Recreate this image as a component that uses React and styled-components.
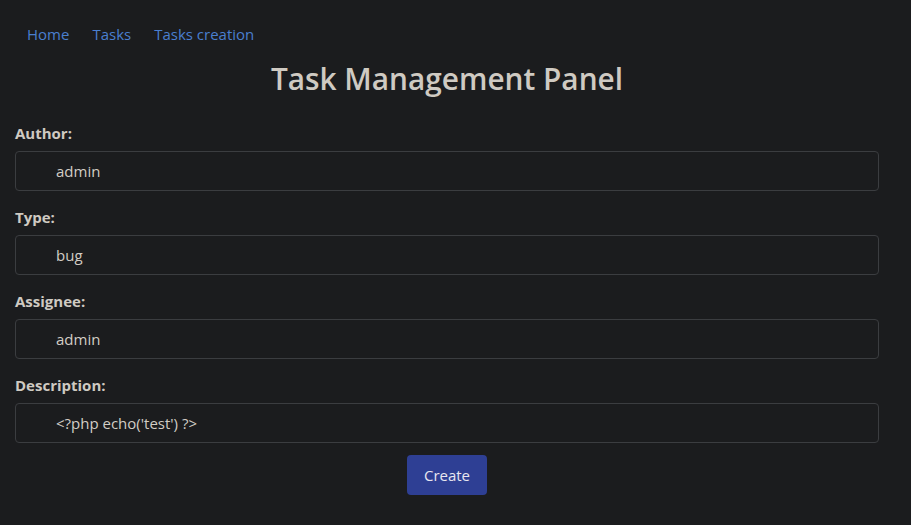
import React from "react";
import styled, { createGlobalStyle } from "styled-components";

const GlobalStyle = createGlobalStyle`
  html, body {
    margin: 0;
    padding: 0;
    background: #1b1c1e;
  }
  body {
    font-family: "Open Sans", "Noto Sans", sans-serif;
    color: #cfcac2;
  }
`;

const fields = [
  { label: "Author:", value: "admin" },
  { label: "Type:", value: "bug" },
  { label: "Assignee:", value: "admin" },
  { label: "Description:", value: "<?php echo('test') ?>" },
];

const App = () => {
  return (
    <>
      <GlobalStyle />
      <Page>
        <Nav>
          <NavLink href="#">Home</NavLink>
          <NavLink href="#">Tasks</NavLink>
          <NavLink href="#">Tasks creation</NavLink>
        </Nav>
        <Title>Task Management Panel</Title>
        <Form onSubmit={(e) => e.preventDefault()}>
          {fields.map((f) => (
            <Field key={f.label}>
              <Label>{f.label}</Label>
              <Input type="text" defaultValue={f.value} />
            </Field>
          ))}
          <Actions>
            <Button type="submit">Create</Button>
          </Actions>
        </Form>
      </Page>
    </>
  );
};

const Page = styled.div`
  padding: 0 32px 0 15px;
  min-height: 525px;
  box-sizing: border-box;
`;

const Nav = styled.nav`
  display: flex;
  gap: 23px;
  padding: 23px 0 0 12px;
  height: 22px;
  align-items: center;
`;

const NavLink = styled.a`
  color: #4a7fcf;
  font-size: 15px;
  text-decoration: none;
`;

const Title = styled.h1`
  margin: 12px 0 0;
  text-align: center;
  font-size: 29.8px;
  font-weight: 600;
  color: #cfcac2;
  line-height: 44px;
`;

const Form = styled.form`
  display: flex;
  flex-direction: column;
  margin-top: 16px;
`;

const Field = styled.div`
  display: flex;
  flex-direction: column;
  margin-bottom: 10px;
`;

const Label = styled.label`
  font-size: 15px;
  font-weight: 700;
  color: #cfcac2;
  line-height: 22px;
  margin: 5px 0 7px;
`;

const Input = styled.input`
  box-sizing: border-box;
  height: 40px;
  padding: 0 0 0 40px;
  background: #1b1c1e;
  border: 1px solid #3b3d40;
  border-radius: 4px;
  color: #d2cdc5;
  font-family: "Open Sans", "Noto Sans", sans-serif;
  font-size: 15px;
  outline: none;
`;

const Actions = styled.div`
  display: flex;
  justify-content: center;
  margin-top: 2px;
`;

const Button = styled.button`
  width: 80px;
  height: 40px;
  background: #2e3f94;
  color: #e8e6f0;
  border: none;
  border-radius: 4px;
  font-family: "Open Sans", "Noto Sans", sans-serif;
  font-size: 15px;
  cursor: pointer;
`;

export default App;
